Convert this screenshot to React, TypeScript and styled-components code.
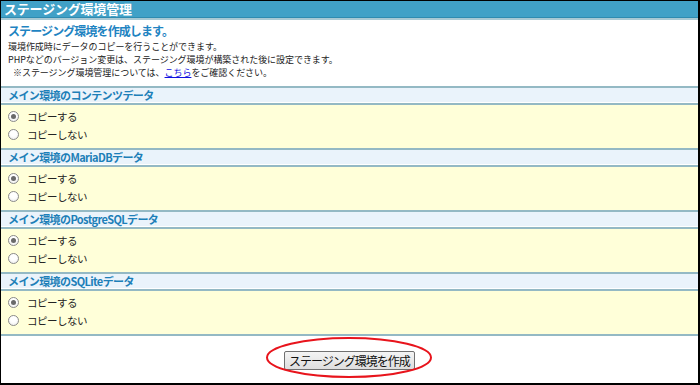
import styled, { createGlobalStyle } from "styled-components"

const GlobalStyle = createGlobalStyle`
  html, body {
    margin: 0;
    padding: 0;
    background: #fff;
  }
  body {
    font-family: "Noto Sans CJK JP", "Liberation Sans", sans-serif;
    color: #222;
  }
`

const Frame = styled.div`
  box-sizing: border-box;
  width: 700px;
  height: 385px;
  border-top: 1px solid #000;
  border-left: 1px solid #000;
  border-right: 2px solid #000;
  border-bottom: 2px solid #000;
  display: flex;
  flex-direction: column;
`

const TitleBar = styled.h1`
  margin: 0;
  height: 16px;
  padding: 0 3px;
  background: #41a1c7;
  border-bottom: 1px solid #2f8bb0;
  box-shadow: 0 2px 0 #a9c9d4;
  color: #fff;
  font-size: 13px;
  font-weight: bold;
  line-height: 16px;
  letter-spacing: -0.2px;
  white-space: nowrap;
`

const Intro = styled.div`
  padding: 4px 7px 7px;
`

const Heading = styled.h2`
  margin: 0 0 1px;
  height: 17px;
  color: #1f84c2;
  font-size: 12px;
  font-weight: bold;
  line-height: 17px;
  letter-spacing: -0.9px;
`

const Note = styled.p<{ $indent?: boolean }>`
  margin: 0;
  height: 13px;
  padding-left: ${p => (p.$indent ? "5px" : "0")};
  font-size: 9px;
  line-height: 13px;
  letter-spacing: -0.05px;
  white-space: nowrap;

  a {
    color: #1010e0;
    text-decoration: underline;
  }
`

const Sections = styled.div`
  border-bottom: 2px solid #94b9c4;
`

const SectionHeader = styled.h3`
  margin: 0;
  height: 14px;
  padding: 0 7px;
  border-top: 2px solid #94b9c4;
  border-bottom: 1px solid #fff;
  background: #eaf3fb;
  color: #1d7fb8;
  font-size: 11px;
  font-weight: bold;
  line-height: 14px;
  letter-spacing: -0.6px;
  white-space: nowrap;
`

const SectionBody = styled.div`
  height: 36px;
  padding: 2px 0 5px;
  border-top: 2px solid #94b9c4;
  background: #ffffd9;
  display: flex;
  flex-direction: column;
`

const Option = styled.label`
  height: 18px;
  display: flex;
  align-items: center;
  gap: 8px;
  padding-left: 7px;
  font-size: 10.5px;
  letter-spacing: -0.5px;
  color: #222;
`

const Radio = styled.input.attrs({ type: "radio" })`
  appearance: none;
  margin: 0;
  width: 11px;
  height: 11px;
  border: 1px solid #8a8a8a;
  border-radius: 50%;
  background: radial-gradient(circle at 50% 35%, #fff 40%, #e8e8e8 100%);
  display: grid;
  place-items: center;

  &:checked::after {
    content: "";
    width: 5px;
    height: 5px;
    border-radius: 50%;
    background: #6a6a6a;
  }
`

const Footer = styled.div`
  flex: 1;
  display: flex;
  align-items: flex-start;
  justify-content: center;
  padding-top: 11px;
`

const ButtonWrap = styled.div`
  position: relative;
`

const SubmitButton = styled.button`
  height: 19px;
  padding: 0 4px;
  border: 1px solid #707070;
  border-radius: 2px;
  background: linear-gradient(#f4f4f4, #dedede);
  color: #111;
  font-family: "Noto Sans CJK JP", "Liberation Sans", sans-serif;
  font-size: 12px;
  line-height: 15px;
  letter-spacing: -1px;
`

const Highlight = styled.svg`
  position: absolute;
  left: -18px;
  top: -10px;
  width: 166px;
  height: 41px;
  pointer-events: none;
  overflow: visible;
`

const sections = [
  { key: "contents", label: "メイン環境のコンテンツデータ" },
  { key: "mariadb", label: "メイン環境のMariaDBデータ" },
  { key: "postgres", label: "メイン環境のPostgreSQLデータ" },
  { key: "sqlite", label: "メイン環境のSQLiteデータ" },
]

export default function App() {
  return (
    <>
      <GlobalStyle />
      <Frame>
        <TitleBar>ステージング環境管理</TitleBar>
        <Intro>
          <Heading>ステージング環境を作成します。</Heading>
          <Note>環境作成時にデータのコピーを行うことができます。</Note>
          <Note>PHPなどのバージョン変更は、ステージング環境が構築された後に設定できます。</Note>
          <Note $indent>
            ※ステージング環境管理については、<a href="#">こちら</a>をご確認ください。
          </Note>
        </Intro>
        <Sections>
          {sections.map(s => (
            <div key={s.key}>
              <SectionHeader>{s.label}</SectionHeader>
              <SectionBody>
                <Option>
                  <Radio name={s.key} defaultChecked />
                  コピーする
                </Option>
                <Option>
                  <Radio name={s.key} />
                  コピーしない
                </Option>
              </SectionBody>
            </div>
          ))}
        </Sections>
        <Footer>
          <ButtonWrap>
            <SubmitButton>ステージング環境を作成</SubmitButton>
            <Highlight viewBox="0 0 166 41">
              <ellipse cx="83" cy="20.5" rx="82" ry="19.5" fill="none" stroke="#e8141c" strokeWidth="2" />
            </Highlight>
          </ButtonWrap>
        </Footer>
      </Frame>
    </>
  )
}
